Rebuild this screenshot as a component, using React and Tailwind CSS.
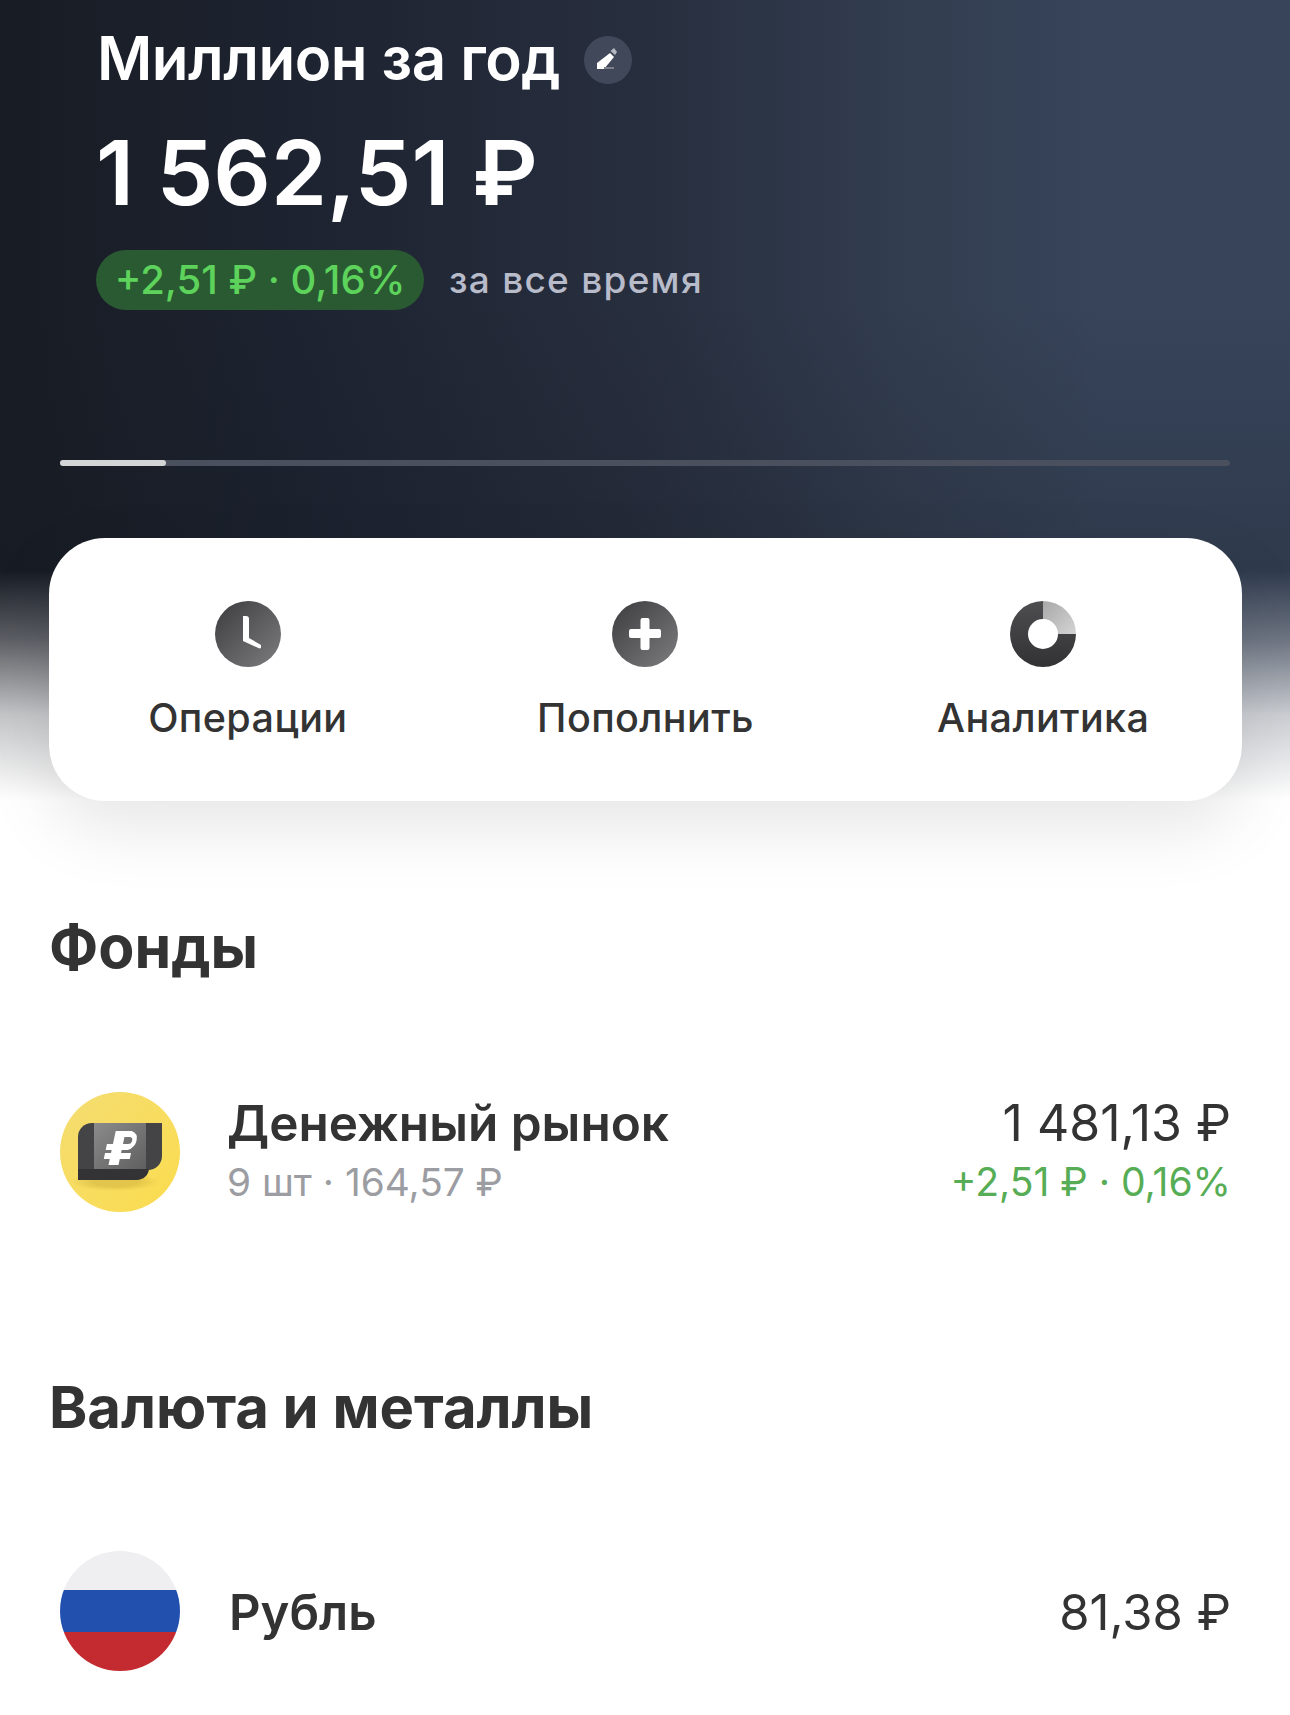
const F = "font-['Inter',sans-serif]";

function Pencil() {
  return (
    <svg viewBox="0 0 48 48" className="w-[48px] h-[48px]">
      <path d="M13 33 V27 L26 17 L30 21 L20 33 Z" fill="#fff" />
      <path d="M26.5 15 L30 12 L33 16 L31 19 Z" fill="#b4b7bf" />
      <rect x="20" y="31" width="10" height="2" fill="#7d808b" />
    </svg>
  );
}

function ClockIcon() {
  return (
    <svg viewBox="0 0 66 66" className="w-[66px] h-[66px]">
      <defs>
        <linearGradient id="g1" x1="0" y1="0" x2="1" y2="1">
          <stop offset="0" stopColor="#3c3c3e" />
          <stop offset="1" stopColor="#7d7d7f" />
        </linearGradient>
      </defs>
      <circle cx="33" cy="33" r="33" fill="url(#g1)" />
      <path d="M28 15 H31 a3 3 0 0 1 3 3 V37 L46 44 V47 L44.5 47.5 L28 40 Z" fill="#fff" />
    </svg>
  );
}

function PlusIcon() {
  return (
    <svg viewBox="0 0 66 66" className="w-[66px] h-[66px]">
      <defs>
        <linearGradient id="g2" x1="0" y1="0" x2="1" y2="1">
          <stop offset="0" stopColor="#3c3c3e" />
          <stop offset="1" stopColor="#7d7d7f" />
        </linearGradient>
      </defs>
      <circle cx="33" cy="33" r="33" fill="url(#g2)" />
      <path d="M28.5 19 a2 2 0 0 1 2 -2 h5 a2 2 0 0 1 2 2 V28 H47 a2 2 0 0 1 2 2 v5 a2 2 0 0 1 -2 2 H37.5 V47 a2 2 0 0 1 -2 2 h-5 a2 2 0 0 1 -2 -2 V37 H19 a2 2 0 0 1 -2 -2 v-5 a2 2 0 0 1 2 -2 H28.5 Z" fill="#fff" />
    </svg>
  );
}

function DonutIcon() {
  return (
    <svg viewBox="0 0 66 66" className="w-[66px] h-[66px]">
      <defs>
        <linearGradient id="g3" x1="0" y1="0" x2="0" y2="1">
          <stop offset="0" stopColor="#4e4e50" />
          <stop offset="1" stopColor="#323234" />
        </linearGradient>
        <linearGradient id="g4" x1="0" y1="0" x2="1" y2="1">
          <stop offset="0" stopColor="#a8a8a8" />
          <stop offset="1" stopColor="#d4d4d4" />
        </linearGradient>
      </defs>
      <path d="M33 0 A33 33 0 1 0 66 33 H48 A15 15 0 1 1 33 18 Z" fill="url(#g3)" />
      <path d="M33 0 A33 33 0 0 1 66 33 H48 A15 15 0 0 0 33 18 Z" fill="url(#g4)" />
    </svg>
  );
}

function CoinIcon() {
  return (
    <svg viewBox="0 0 120 120" className="w-[120px] h-[120px] shrink-0">
      <defs>
        <linearGradient id="y1" x1="0" y1="0" x2="1" y2="1">
          <stop offset="0" stopColor="#f4dd72" />
          <stop offset="1" stopColor="#fbdc4e" />
        </linearGradient>
        <linearGradient id="c1" x1="0" y1="0" x2="1" y2="1">
          <stop offset="0" stopColor="#8b8b8b" />
          <stop offset="1" stopColor="#5f5f5f" />
        </linearGradient>
        <radialGradient id="sh" cx="0.5" cy="0.5" r="0.5">
          <stop offset="0.5" stopColor="#b99a2c" stopOpacity="0.35" />
          <stop offset="1" stopColor="#b99a2c" stopOpacity="0" />
        </radialGradient>
      </defs>
      <circle cx="60" cy="60" r="60" fill="url(#y1)" />
      <ellipse cx="55" cy="90" rx="44" ry="9" fill="url(#sh)" />
      <path d="M32 31 H102 V64 a14 14 0 0 1 -14 14 H18 V45 a14 14 0 0 1 14 -14 Z" fill="#444446" />
      <path d="M18 77 H89 a12 12 0 0 1 -12 11 H18 Z" fill="#333335" />
      <rect x="34" y="31" width="52" height="46" fill="url(#c1)" />
      <g transform="translate(12 0) skewX(-12)">
        <path d="M52 73 V67 H46 V61 H52 V58 H46 V52 H52 V39 H68 a10 10 0 0 1 0 19 H62 V61 H72 V67 H62 V73 Z M62 45 V52 H67 a3.5 3.5 0 0 0 0 -7 Z" fill="#fff" fillRule="evenodd" />
      </g>
    </svg>
  );
}

function FlagIcon() {
  return (
    <div className="w-[120px] h-[120px] rounded-full overflow-hidden shrink-0 flex flex-col">
      <div className="h-[39px] bg-[#efeff1]" />
      <div className="h-[42px] bg-[#2250ae]" />
      <div className="h-[39px] bg-[#c42b31]" />
    </div>
  );
}

function Action({ icon, label }) {
  return (
    <div className="flex flex-col items-center pt-[63px]">
      {icon}
      <div className="mt-[29px] text-[39.5px] leading-[44px] font-medium tracking-[0.4px] text-[#333333]">{label}</div>
    </div>
  );
}

export default function App() {
  return (
    <div className={`${F} w-[1290px] h-[1715px] overflow-hidden flex flex-col bg-white bg-no-repeat bg-[linear-gradient(to_bottom,rgba(255,255,255,0)_0,rgba(255,255,255,0)_570px,rgba(255,255,255,0.3)_640px,rgba(255,255,255,0.75)_715px,#ffffff_800px),linear-gradient(to_bottom,rgba(20,24,32,0)_300px,rgba(20,24,32,0.22)_560px),linear-gradient(to_right,#181c24_0,#1d2330_300px,#272e3e_640px,#323d4f_900px,#37445a_1100px,#37445a_100%)]`}>
      <div className="pl-[97px] pt-[26px] flex items-center">
        <div className="text-[60px] leading-[64px] font-semibold text-white tracking-[-0.5px]">Миллион за год</div>
        <div className="ml-[24px] mt-[4px] w-[48px] h-[48px] rounded-full bg-[#41485a]">
          <Pencil />
        </div>
      </div>
      <div className="pl-[96px] mt-[31px] text-[90px] leading-[104px] font-semibold text-white">1 562,51 ₽</div>
      <div className="pl-[96px] mt-[25px] flex items-center">
        <div className="h-[60px] w-[328px] rounded-full bg-[#2a5a32] flex items-center justify-center text-[40px] font-medium text-[#5dd35b]">+2,51 ₽ · 0,16%</div>
        <div className="ml-[25px] text-[37px] leading-[60px] font-medium tracking-[1.25px] text-[#b8bbc9]">за все время</div>
      </div>
      <div className="mx-[60px] mt-[150px] h-[6px] rounded-full bg-[#4a505d]">
        <div className="w-[106px] h-[6px] rounded-full bg-[#d2d4d6]" />
      </div>
      <div className="ml-[49px] mr-[48px] mt-[72px] h-[263px] rounded-[56px] bg-white shadow-[0_26px_70px_rgba(0,0,0,0.10)] grid grid-cols-3 shrink-0">
        <Action icon={<ClockIcon />} label="Операции" />
        <Action icon={<PlusIcon />} label="Пополнить" />
        <Action icon={<DonutIcon />} label="Аналитика" />
      </div>
      <div className="pl-[49px] mt-[111px] text-[59px] leading-[70px] font-bold text-[#333333]">Фонды</div>
      <div className="ml-[60px] mr-[59px] mt-[110px] flex items-center">
        <CoinIcon />
        <div className="ml-[47px] flex-1 pb-[5px]">
          <div className="text-[49.5px] leading-[60px] font-semibold text-[#333333]">Денежный рынок</div>
          <div className="mt-[5px] text-[38.8px] leading-[48px] text-[#9b9da2]">9 шт · 164,57 ₽</div>
        </div>
        <div className="text-right pb-[5px]">
          <div className="text-[50px] leading-[60px] text-[#333333]">1 481,13 ₽</div>
          <div className="mt-[5px] text-[39.1px] leading-[48px] text-[#57ad55]">+2,51 ₽ · 0,16%</div>
        </div>
      </div>
      <div className="pl-[49px] mt-[160px] text-[58px] leading-[70px] font-bold text-[#333333]">Валюта и металлы</div>
      <div className="ml-[60px] mr-[59px] mt-[109px] flex items-center">
        <FlagIcon />
        <div className="ml-[49px] pt-[3px] flex-1 text-[49px] leading-[60px] font-semibold text-[#333333]">Рубль</div>
        <div className="pt-[3px] text-[49px] leading-[60px] text-[#333333]">81,38 ₽</div>
      </div>
    </div>
  );
}
